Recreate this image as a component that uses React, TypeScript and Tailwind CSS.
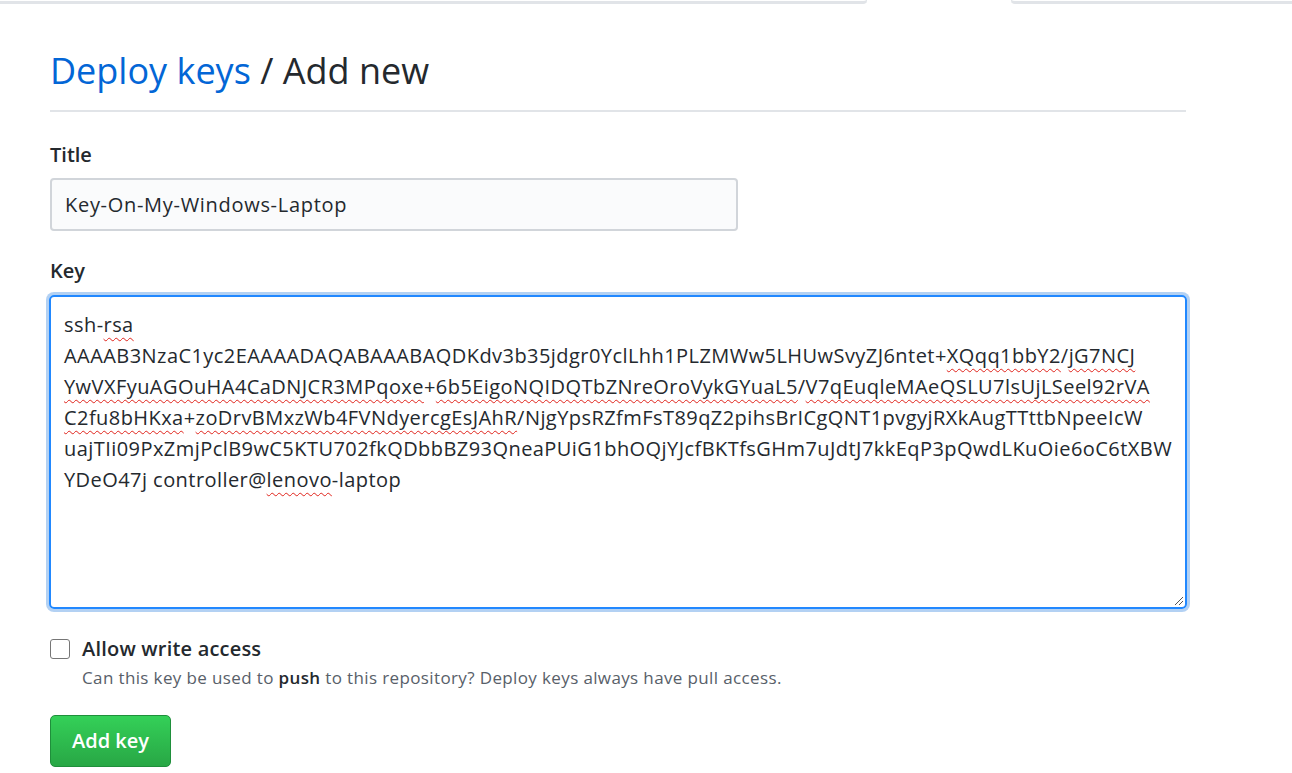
import React from "react";

const font = { fontFamily: '"Open Sans", "Noto Sans", sans-serif' };

function Sp({ children }: { children: React.ReactNode }) {
  return (
    <span className="underline decoration-wavy decoration-[#e0241c] decoration-1 underline-offset-[5px]">
      {children}
    </span>
  );
}

const keyLines: React.ReactNode[] = [
  <>
    ssh-<Sp>rsa</Sp>
  </>,
  <>
    AAAAB3NzaC1yc2EAAAADAQABAAABAQDKdv3b35jdgr0YclLhh1PLZMWw5LHUwSvyZJ6ntet+<Sp>XQqq1bbY2</Sp>/<Sp>jG7NCJ</Sp>
  </>,
  <>
    <Sp>YwVXFyuAGOuHA4CaDNJCR3MPqoxe</Sp>+<Sp>6b5EigoNQIDQTbZNreOroVykGYuaL5</Sp>/<Sp>V7qEuqleMAeQSLU7lsUjLSeel92rVA</Sp>
  </>,
  <>
    <Sp>C2fu8bHKxa</Sp>+<Sp>zoDrvBMxzWb4FVNdyercgEsJAhR</Sp>/NjgYpsRZfmFsT89qZ2pihsBrICgQNT1pvgyjRXkAugTTttbNpeeIcW
  </>,
  <>uajTIi09PxZmjPclB9wC5KTU702fkQDbbBZ93QneaPUiG1bhOQjYJcfBKTfsGHm7uJdtJ7kkEqP3pQwdLKuOie6oC6tXBW</>,
  <>
    YDeO47j controller@<Sp>lenovo</Sp>-laptop
  </>,
];

export default function App() {
  return (
    <div className="min-h-[773px] bg-white text-[#24292e]" style={font}>
      <div className="flex h-[4px]">
        <div className="w-[867px] rounded-br border-b-[3px] border-r border-[#e1e4e8]" />
        <div className="w-[144px]" />
        <div className="flex-1 rounded-bl border-b-[3px] border-l border-[#e1e4e8]" />
      </div>

      <div className="ml-[50px] w-[1136px]">
        <h2 className="mt-[44px] border-b-2 border-[#e1e4e8] pb-[16px] text-[36px] font-normal leading-[46px]">
          <span className="text-[#0366d6]">Deploy keys</span> / Add new
        </h2>

        <div className="mt-[29px] text-[20px] font-semibold leading-[28px]">Title</div>
        <div className="mt-[9px] flex h-[53px] w-[688px] items-center rounded-[4px] border-2 border-[#d1d5da] bg-[#fafbfc] px-[13px] text-[20px] tracking-[0.7px]">
          Key-On-My-Windows-Laptop
        </div>

        <div className="mt-[26px] text-[20px] font-semibold leading-[28px]">Key</div>
        <div className="relative mt-[10px] h-[314px] w-[1138px] -ml-[1px] rounded-[5px] border-2 border-[#2188ff] px-[13px] pt-[12px] text-[20px] leading-[31px] tracking-[0.44px] shadow-[0_0_0_3px_rgba(3,102,214,0.3)]">
          {keyLines.map((line, i) => (
            <div key={i} className="whitespace-nowrap">
              {line}
            </div>
          ))}
          <svg className="absolute bottom-[1px] right-[1px]" width="12" height="12" viewBox="0 0 12 12">
            <path d="M11 3 L3 11 M11 7 L7 11" stroke="#555" strokeWidth="1" />
          </svg>
        </div>

        <div className="mt-[26px] flex items-center gap-[12px]">
          <span className="h-[20px] w-[20px] rounded-[3px] border border-[#767676] bg-white" />
          <span className="text-[20px] font-semibold leading-[28px] tracking-[0.2px]">Allow write access</span>
        </div>
        <p className="ml-[32px] mt-[2px] text-[17px] leading-[26px] tracking-[0.37px] text-[#586069]">
          Can this key be used to <b className="font-semibold text-[#24292e]">push</b> to this
          repository? Deploy keys always have pull access.
        </p>

        <button
          type="button"
          className="mt-[24px] h-[52px] rounded-[5px] border border-[#1f8f3b] bg-gradient-to-b from-[#34d058] to-[#28a745] px-[21px] text-[20px] font-semibold text-white"
        >
          Add key
        </button>
      </div>
    </div>
  );
}
